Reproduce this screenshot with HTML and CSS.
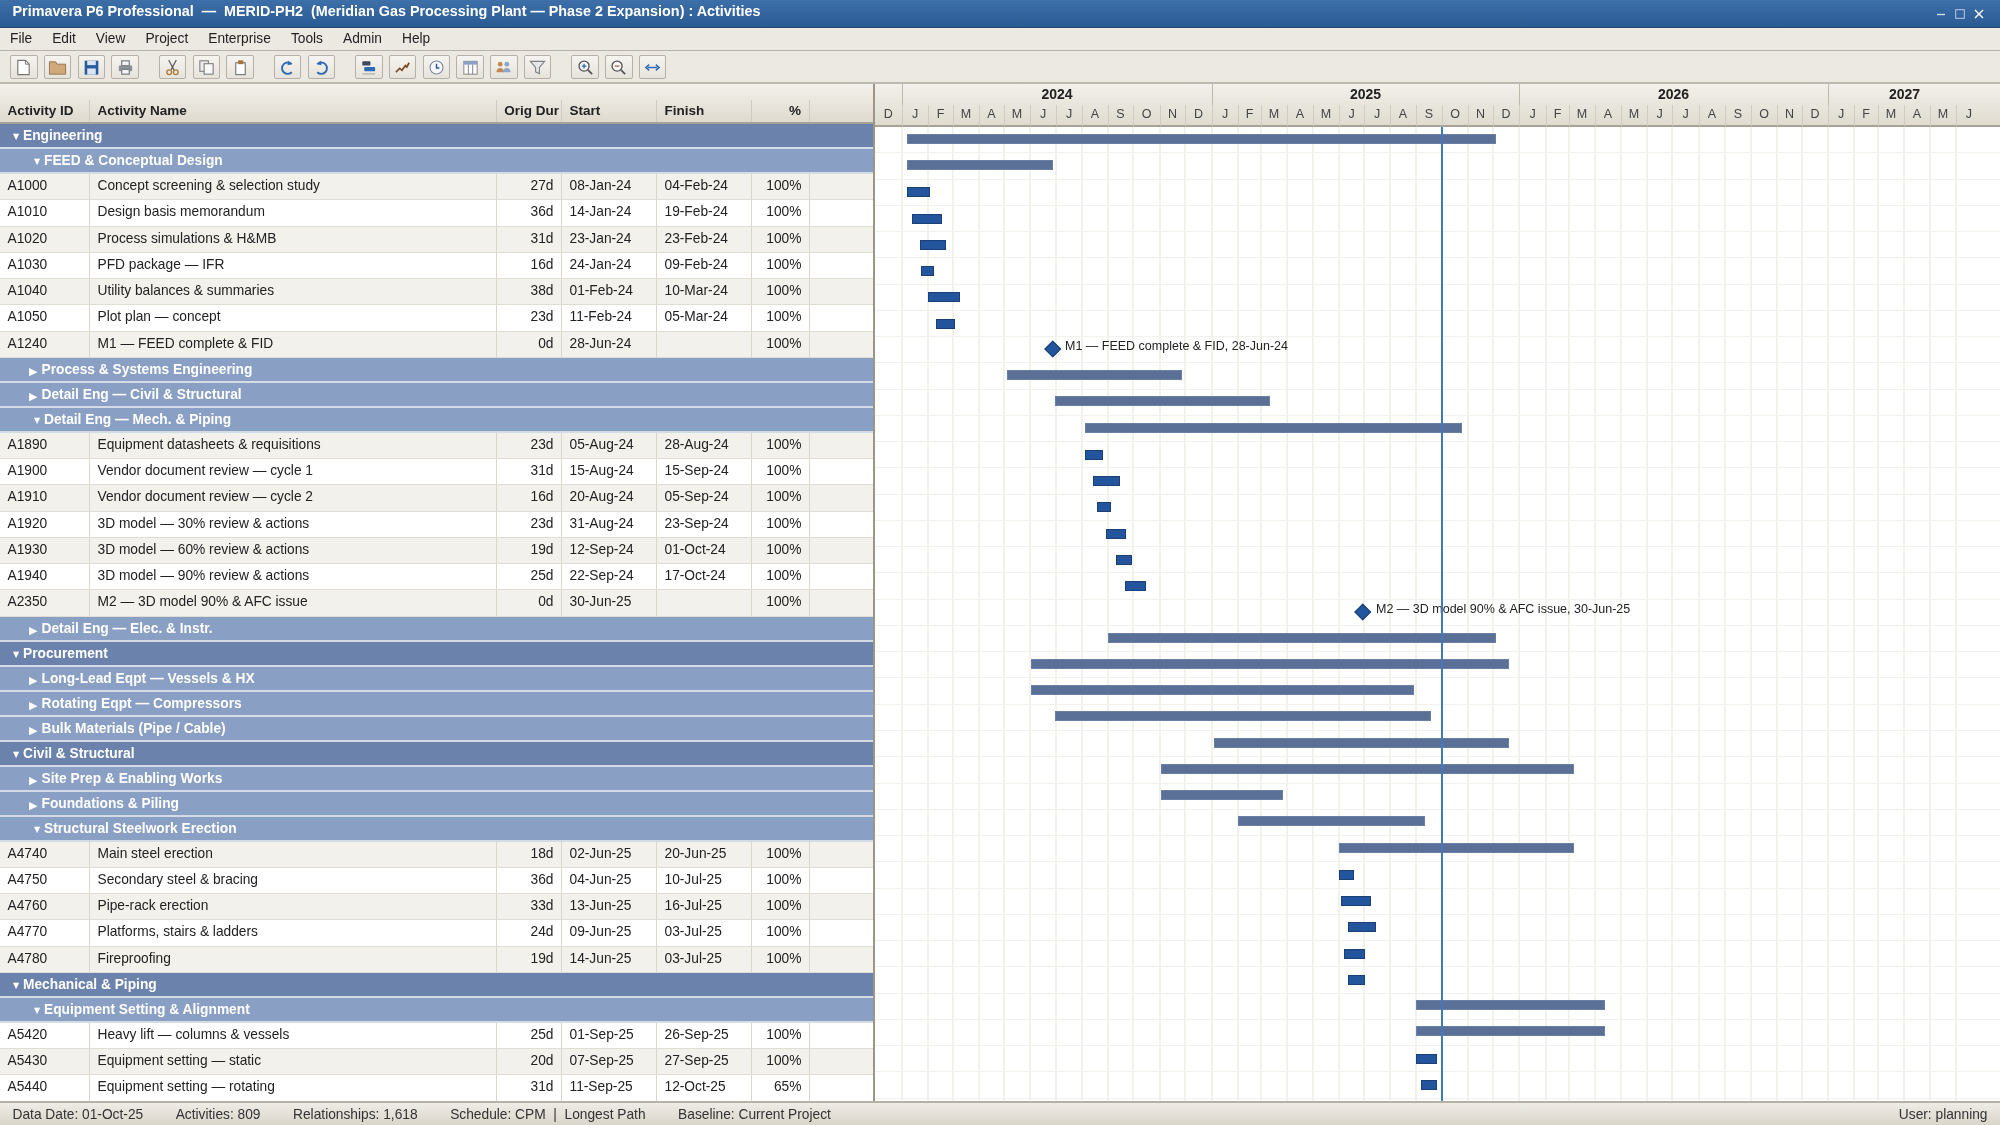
FILE: index.html
```html
<!DOCTYPE html>
<html lang="en">
<head>
    <meta charset="UTF-8">
    <title>Primavera P6 Professional</title>
    <link rel="stylesheet" href="styles.css">
</head>
<body>
    <div class="titlebar">
        <span class="title-text">Primavera P6 Professional &nbsp;—&nbsp; MERID-PH2 &nbsp;(Meridian Gas Processing Plant — Phase 2 Expansion) : Activities</span>
        <div class="win-controls">
            <svg width="10" height="10" viewBox="0 0 10 10"><path d="M1 5.5h8" stroke="#cfdcec" stroke-width="1.4"/></svg>
            <svg width="10" height="10" viewBox="0 0 10 10"><rect x="0.7" y="0.7" width="8.6" height="8.6" fill="none" stroke="#b9cde4" stroke-width="1"/></svg>
            <svg width="10" height="10" viewBox="0 0 10 10"><path d="M1 1l8 8M9 1l-8 8" stroke="#fff" stroke-width="1.4"/></svg>
        </div>
    </div>
    <div class="menubar">
        <span>File</span><span>Edit</span><span>View</span><span>Project</span><span>Enterprise</span><span>Tools</span><span>Admin</span><span>Help</span>
    </div>
    <div class="toolbar">
        <div class="tool-group">
            <button class="tool"><svg viewBox="0 0 20 20"><path d="M4 2.500h8l4 4v11H4z" fill="#fff" stroke="#777" stroke-width="1.200"/><path d="M12 2.500v4h4" fill="none" stroke="#777"/></svg></button>
            <button class="tool"><svg viewBox="0 0 20 20"><path d="M1.500 4h6.500l1.500 2.500h9v10.500h-17z" fill="#cfa97c" stroke="#96734c"/></svg></button>
            <button class="tool"><svg viewBox="0 0 20 20"><path d="M2.800 2.800h14.400v14.700H2.800z" fill="#275a9e"/><rect x="5.500" y="2.800" width="9" height="4.700" fill="#dbe4ef"/><rect x="5.500" y="11" width="9" height="6.500" fill="#dbe4ef"/></svg></button>
            <button class="tool"><svg viewBox="0 0 20 20"><rect x="6" y="3" width="8" height="5" fill="#f4f4f4" stroke="#7b7f86" stroke-width="1.300"/><rect x="3" y="8" width="14" height="6" rx="1" fill="#8a8e95"/><rect x="6" y="12" width="8" height="5" fill="#f4f4f4" stroke="#7b7f86" stroke-width="1.300"/></svg></button>
        </div>
        <div class="tool-group">
            <button class="tool"><svg viewBox="0 0 20 20"><path d="M6 2l5.500 10.500M14 2L8.500 12.500" stroke="#555" stroke-width="1.200" fill="none"/><circle cx="6.500" cy="15" r="2.500" fill="none" stroke="#b07a3a" stroke-width="1.400"/><circle cx="13.500" cy="15" r="2.500" fill="none" stroke="#b07a3a" stroke-width="1.400"/></svg></button>
            <button class="tool"><svg viewBox="0 0 20 20"><rect x="3" y="3" width="9" height="11" fill="#eee" stroke="#808080" stroke-width="1.200"/><rect x="7.500" y="6" width="9.500" height="11" fill="#f8f8f8" stroke="#808080" stroke-width="1.200"/></svg></button>
            <button class="tool"><svg viewBox="0 0 20 20"><rect x="5" y="5" width="10" height="12.500" fill="#fff" stroke="#777" stroke-width="1.200"/><rect x="7.500" y="2.500" width="5.500" height="4" fill="#a8703a"/></svg></button>
        </div>
        <div class="tool-group">
            <button class="tool"><svg viewBox="0 0 20 20"><path d="M14.500 6.500A6 6 0 1 0 14.500 15" fill="none" stroke="#2d6cb5" stroke-width="2"/><path d="M11 2.500l3.500 4-4.500 1" fill="#2d6cb5"/></svg></button>
            <button class="tool"><svg viewBox="0 0 20 20"><path d="M5.500 6.500A6 6 0 1 1 5.500 15" fill="none" stroke="#2d6cb5" stroke-width="2"/><path d="M9 2.500l-3.500 4 4.500 1" fill="#2d6cb5"/></svg></button>
        </div>
        <div class="tool-group">
            <button class="tool"><svg viewBox="0 0 20 20"><rect x="3.500" y="3.500" width="8.500" height="4.500" rx="1" fill="#3d4a5c"/><rect x="5.500" y="9.500" width="11.500" height="4.500" rx="1" fill="#2d6cb5"/><rect x="3.500" y="16" width="13.500" height="1.500" fill="#b9b6ad"/></svg></button>
            <button class="tool"><svg viewBox="0 0 20 20"><path d="M3 15l4-4 2.500 2L13 8l1.500 1.500L17 5" fill="none" stroke="#7a4a20" stroke-width="1.800"/></svg></button>
            <button class="tool"><svg viewBox="0 0 20 20"><circle cx="10" cy="10" r="6.800" fill="#f7f8fb" stroke="#7d8aa0" stroke-width="1.200"/><path d="M10 6v4.500h3" fill="none" stroke="#2a5a9c" stroke-width="1.500"/></svg></button>
            <button class="tool"><svg viewBox="0 0 20 20"><rect x="3" y="3.500" width="14" height="13.500" fill="#fff" stroke="#808080"/><rect x="3" y="3.500" width="14" height="3.500" fill="#8ba0c6"/><path d="M7.700 7v10M12.300 7v10" stroke="#808080"/></svg></button>
            <button class="tool"><svg viewBox="0 0 20 20"><circle cx="6.500" cy="6.500" r="2.500" fill="#c18a50"/><path d="M2.500 15c0-6 8-6 8 0z" fill="#c18a50"/><circle cx="13.500" cy="6.500" r="2.500" fill="#8aa6cc"/><path d="M9.500 15c0-6 8-6 8 0z" fill="#8aa6cc"/></svg></button>
            <button class="tool"><svg viewBox="0 0 20 20"><path d="M2.500 3.500h15L12 10v6.500l-4-2V10z" fill="#e6e8ec" stroke="#7d8084" stroke-width="1.200"/></svg></button>
        </div>
        <div class="tool-group">
            <button class="tool"><svg viewBox="0 0 20 20"><circle cx="8.500" cy="8.500" r="5.300" fill="#f7f8fb" stroke="#555" stroke-width="1.400"/><path d="M12.500 12.500l4.500 4.500" stroke="#555" stroke-width="1.800"/><path d="M6 8.500h5M8.500 6v5" stroke="#2d6cb5" stroke-width="1.400"/></svg></button>
            <button class="tool"><svg viewBox="0 0 20 20"><circle cx="8.500" cy="8.500" r="5.300" fill="#f7f8fb" stroke="#555" stroke-width="1.400"/><path d="M12.500 12.500l4.500 4.500" stroke="#555" stroke-width="1.800"/><path d="M6 8.500h5" stroke="#a8703a" stroke-width="1.400"/></svg></button>
            <button class="tool"><svg viewBox="0 0 20 20"><path d="M5 10h10M6.500 7L3 10l3.500 3M13.500 7L17 10l-3.500 3" fill="none" stroke="#2d6cb5" stroke-width="1.500"/></svg></button>
        </div>
    </div>

    <div class="workspace">
        <div class="table-pane">
            <div class="tbl-head">
                <div class="hcell">Activity ID</div>
                <div class="hcell">Activity Name</div>
                <div class="hcell num tight">Orig Dur</div>
                <div class="hcell">Start</div>
                <div class="hcell">Finish</div>
                <div class="hcell num">%</div>
                <div class="hcell"></div>
            </div>

            <div class="band lvl1"><i class="open">▼</i>Engineering</div>
            <div class="band lvl2"><i class="open">▼</i>FEED &amp; Conceptual Design</div>
            <div class="row alt"><div>A1000</div><div>Concept screening &amp; selection study</div><div class="num">27d</div><div>08-Jan-24</div><div>04-Feb-24</div><div class="num">100%</div><div></div></div>
            <div class="row"><div>A1010</div><div>Design basis memorandum</div><div class="num">36d</div><div>14-Jan-24</div><div>19-Feb-24</div><div class="num">100%</div><div></div></div>
            <div class="row alt"><div>A1020</div><div>Process simulations &amp; H&amp;MB</div><div class="num">31d</div><div>23-Jan-24</div><div>23-Feb-24</div><div class="num">100%</div><div></div></div>
            <div class="row"><div>A1030</div><div>PFD package — IFR</div><div class="num">16d</div><div>24-Jan-24</div><div>09-Feb-24</div><div class="num">100%</div><div></div></div>
            <div class="row alt"><div>A1040</div><div>Utility balances &amp; summaries</div><div class="num">38d</div><div>01-Feb-24</div><div>10-Mar-24</div><div class="num">100%</div><div></div></div>
            <div class="row"><div>A1050</div><div>Plot plan — concept</div><div class="num">23d</div><div>11-Feb-24</div><div>05-Mar-24</div><div class="num">100%</div><div></div></div>
            <div class="row alt"><div>A1240</div><div>M1 — FEED complete &amp; FID</div><div class="num">0d</div><div>28-Jun-24</div><div></div><div class="num">100%</div><div></div></div>
            <div class="band lvl2"><i>▶</i>Process &amp; Systems Engineering</div>
            <div class="band lvl2"><i>▶</i>Detail Eng — Civil &amp; Structural</div>
            <div class="band lvl2"><i class="open">▼</i>Detail Eng — Mech. &amp; Piping</div>
            <div class="row alt"><div>A1890</div><div>Equipment datasheets &amp; requisitions</div><div class="num">23d</div><div>05-Aug-24</div><div>28-Aug-24</div><div class="num">100%</div><div></div></div>
            <div class="row"><div>A1900</div><div>Vendor document review — cycle 1</div><div class="num">31d</div><div>15-Aug-24</div><div>15-Sep-24</div><div class="num">100%</div><div></div></div>
            <div class="row alt"><div>A1910</div><div>Vendor document review — cycle 2</div><div class="num">16d</div><div>20-Aug-24</div><div>05-Sep-24</div><div class="num">100%</div><div></div></div>
            <div class="row"><div>A1920</div><div>3D model — 30% review &amp; actions</div><div class="num">23d</div><div>31-Aug-24</div><div>23-Sep-24</div><div class="num">100%</div><div></div></div>
            <div class="row alt"><div>A1930</div><div>3D model — 60% review &amp; actions</div><div class="num">19d</div><div>12-Sep-24</div><div>01-Oct-24</div><div class="num">100%</div><div></div></div>
            <div class="row"><div>A1940</div><div>3D model — 90% review &amp; actions</div><div class="num">25d</div><div>22-Sep-24</div><div>17-Oct-24</div><div class="num">100%</div><div></div></div>
            <div class="row alt"><div>A2350</div><div>M2 — 3D model 90% &amp; AFC issue</div><div class="num">0d</div><div>30-Jun-25</div><div></div><div class="num">100%</div><div></div></div>
            <div class="band lvl2"><i>▶</i>Detail Eng — Elec. &amp; Instr.</div>
            <div class="band lvl1"><i class="open">▼</i>Procurement</div>
            <div class="band lvl2"><i>▶</i>Long-Lead Eqpt — Vessels &amp; HX</div>
            <div class="band lvl2"><i>▶</i>Rotating Eqpt — Compressors</div>
            <div class="band lvl2"><i>▶</i>Bulk Materials (Pipe / Cable)</div>
            <div class="band lvl1"><i class="open">▼</i>Civil &amp; Structural</div>
            <div class="band lvl2"><i>▶</i>Site Prep &amp; Enabling Works</div>
            <div class="band lvl2"><i>▶</i>Foundations &amp; Piling</div>
            <div class="band lvl2"><i class="open">▼</i>Structural Steelwork Erection</div>
            <div class="row alt"><div>A4740</div><div>Main steel erection</div><div class="num">18d</div><div>02-Jun-25</div><div>20-Jun-25</div><div class="num">100%</div><div></div></div>
            <div class="row"><div>A4750</div><div>Secondary steel &amp; bracing</div><div class="num">36d</div><div>04-Jun-25</div><div>10-Jul-25</div><div class="num">100%</div><div></div></div>
            <div class="row alt"><div>A4760</div><div>Pipe-rack erection</div><div class="num">33d</div><div>13-Jun-25</div><div>16-Jul-25</div><div class="num">100%</div><div></div></div>
            <div class="row"><div>A4770</div><div>Platforms, stairs &amp; ladders</div><div class="num">24d</div><div>09-Jun-25</div><div>03-Jul-25</div><div class="num">100%</div><div></div></div>
            <div class="row alt"><div>A4780</div><div>Fireproofing</div><div class="num">19d</div><div>14-Jun-25</div><div>03-Jul-25</div><div class="num">100%</div><div></div></div>
            <div class="band lvl1"><i class="open">▼</i>Mechanical &amp; Piping</div>
            <div class="band lvl2"><i class="open">▼</i>Equipment Setting &amp; Alignment</div>
            <div class="row"><div>A5420</div><div>Heavy lift — columns &amp; vessels</div><div class="num">25d</div><div>01-Sep-25</div><div>26-Sep-25</div><div class="num">100%</div><div></div></div>
            <div class="row alt"><div>A5430</div><div>Equipment setting — static</div><div class="num">20d</div><div>07-Sep-25</div><div>27-Sep-25</div><div class="num">100%</div><div></div></div>
            <div class="row"><div>A5440</div><div>Equipment setting — rotating</div><div class="num">31d</div><div>11-Sep-25</div><div>12-Oct-25</div><div class="num">65%</div><div></div></div>
        </div>

        <div class="gantt">
            <div class="years">
                <div class="year" style="width:27.5px"></div>
                <div class="year" style="width:310px">2024</div>
                <div class="year" style="width:307px">2025</div>
                <div class="year" style="width:309px">2026</div>
                <div class="year last" style="width:171.5px"><b>2027</b></div>
            </div>
            <div class="months">
                <div class="mon" style="width:27.5px"><span>D</span></div>
                <div class="mon" style="width:26px"><span>J</span></div>
                <div class="mon" style="width:25px"><span>F</span></div>
                <div class="mon" style="width:26px"><span>M</span></div>
                <div class="mon" style="width:25px"><span>A</span></div>
                <div class="mon" style="width:26px"><span>M</span></div>
                <div class="mon" style="width:26px"><span>J</span></div>
                <div class="mon" style="width:26px"><span>J</span></div>
                <div class="mon" style="width:26px"><span>A</span></div>
                <div class="mon" style="width:25px"><span>S</span></div>
                <div class="mon" style="width:27px"><span>O</span></div>
                <div class="mon" style="width:25px"><span>N</span></div>
                <div class="mon" style="width:27px"><span>D</span></div>
                <div class="mon" style="width:26px"><span>J</span></div>
                <div class="mon" style="width:23px"><span>F</span></div>
                <div class="mon" style="width:26px"><span>M</span></div>
                <div class="mon" style="width:26px"><span>A</span></div>
                <div class="mon" style="width:26px"><span>M</span></div>
                <div class="mon" style="width:25px"><span>J</span></div>
                <div class="mon" style="width:26px"><span>J</span></div>
                <div class="mon" style="width:26px"><span>A</span></div>
                <div class="mon" style="width:26px"><span>S</span></div>
                <div class="mon" style="width:26px"><span>O</span></div>
                <div class="mon" style="width:25px"><span>N</span></div>
                <div class="mon" style="width:26px"><span>D</span></div>
                <div class="mon" style="width:27px"><span>J</span></div>
                <div class="mon" style="width:23px"><span>F</span></div>
                <div class="mon" style="width:26px"><span>M</span></div>
                <div class="mon" style="width:26px"><span>A</span></div>
                <div class="mon" style="width:26px"><span>M</span></div>
                <div class="mon" style="width:25px"><span>J</span></div>
                <div class="mon" style="width:27px"><span>J</span></div>
                <div class="mon" style="width:26px"><span>A</span></div>
                <div class="mon" style="width:26px"><span>S</span></div>
                <div class="mon" style="width:26px"><span>O</span></div>
                <div class="mon" style="width:25px"><span>N</span></div>
                <div class="mon" style="width:26px"><span>D</span></div>
                <div class="mon" style="width:26px"><span>J</span></div>
                <div class="mon" style="width:24px"><span>F</span></div>
                <div class="mon" style="width:26px"><span>M</span></div>
                <div class="mon" style="width:26px"><span>A</span></div>
                <div class="mon" style="width:26px"><span>M</span></div>
                <div class="mon last" style="width:43.5px"><span>J</span></div>
            </div>
            <div class="grid-lines"></div>
            <div class="bars">
                <div class="g-row"><div class="bar sum" style="left:32px;width:589px"></div></div>
                <div class="g-row"><div class="bar sum" style="left:32px;width:146px"></div></div>
                <div class="g-row"><div class="bar task" style="left:32px;width:23px"></div></div>
                <div class="g-row"><div class="bar task" style="left:37px;width:30px"></div></div>
                <div class="g-row"><div class="bar task" style="left:45px;width:26px"></div></div>
                <div class="g-row"><div class="bar task" style="left:46px;width:13px"></div></div>
                <div class="g-row"><div class="bar task" style="left:53px;width:32px"></div></div>
                <div class="g-row"><div class="bar task" style="left:61px;width:19px"></div></div>
                <div class="g-row"><div class="ms" style="left:172px"></div><span class="ms-label" style="left:190px">M1 — FEED complete &amp; FID, 28-Jun-24</span></div>
                <div class="g-row"><div class="bar sum" style="left:132px;width:175px"></div></div>
                <div class="g-row"><div class="bar sum" style="left:180px;width:215px"></div></div>
                <div class="g-row"><div class="bar sum" style="left:210px;width:377px"></div></div>
                <div class="g-row"><div class="bar task" style="left:210px;width:18px"></div></div>
                <div class="g-row"><div class="bar task" style="left:218px;width:27px"></div></div>
                <div class="g-row"><div class="bar task" style="left:222px;width:14px"></div></div>
                <div class="g-row"><div class="bar task" style="left:231px;width:20px"></div></div>
                <div class="g-row"><div class="bar task" style="left:241px;width:16px"></div></div>
                <div class="g-row"><div class="bar task" style="left:250px;width:21px"></div></div>
                <div class="g-row"><div class="ms" style="left:482px"></div><span class="ms-label" style="left:501px">M2 — 3D model 90% &amp; AFC issue, 30-Jun-25</span></div>
                <div class="g-row"><div class="bar sum" style="left:233px;width:388px"></div></div>
                <div class="g-row"><div class="bar sum" style="left:156px;width:478px"></div></div>
                <div class="g-row"><div class="bar sum" style="left:156px;width:383px"></div></div>
                <div class="g-row"><div class="bar sum" style="left:180px;width:376px"></div></div>
                <div class="g-row"><div class="bar sum" style="left:339px;width:295px"></div></div>
                <div class="g-row"><div class="bar sum" style="left:286px;width:413px"></div></div>
                <div class="g-row"><div class="bar sum" style="left:286px;width:122px"></div></div>
                <div class="g-row"><div class="bar sum" style="left:363px;width:187px"></div></div>
                <div class="g-row"><div class="bar sum" style="left:464px;width:235px"></div></div>
                <div class="g-row"><div class="bar task" style="left:464px;width:15px"></div></div>
                <div class="g-row"><div class="bar task" style="left:466px;width:30px"></div></div>
                <div class="g-row"><div class="bar task" style="left:473px;width:28px"></div></div>
                <div class="g-row"><div class="bar task" style="left:469px;width:21px"></div></div>
                <div class="g-row"><div class="bar task" style="left:473px;width:17px"></div></div>
                <div class="g-row"><div class="bar sum" style="left:541px;width:189px"></div></div>
                <div class="g-row"><div class="bar sum" style="left:541px;width:189px"></div></div>
                <div class="g-row"><div class="bar task" style="left:541px;width:21px"></div></div>
                <div class="g-row"><div class="bar task" style="left:546px;width:16px"></div></div>
            </div>
            <div class="data-date"></div>
        </div>
    </div>

    <div class="statusbar">
        <span>Data Date: 01-Oct-25</span>
        <span>Activities: 809</span>
        <span>Relationships: 1,618</span>
        <span>Schedule: CPM &nbsp;|&nbsp; Longest Path</span>
        <span>Baseline: Current Project</span>
        <span class="status-user">User: planning</span>
    </div>
</body>
</html>
```

FILE: styles.css
```css
body, html {
    margin: 0;
    padding: 0;
    width: 100%;
    height: 100%;
    overflow: hidden;
    font-family: "Liberation Sans", Arial, sans-serif;
    font-size: 13.75px;
    color: #222;
    background-color: #ece9e2;
}
body {
    display: flex;
    flex-direction: column;
    filter: blur(0.35px);
}
.titlebar {
    height: 28px;
    flex: none;
    box-sizing: border-box;
    display: flex;
    align-items: flex-start;
    justify-content: space-between;
    padding: 4px 16px 0 12.5px;
    background: linear-gradient(#3d6fa8, #2a5a92);
    border-bottom: 1px solid #1f4674;
    color: white;
    font-size: 14.375px;
    font-weight: bold;
    line-height: 15px;
}
.win-controls {
    display: flex;
    gap: 9px;
    padding-top: 5px;
}
.menubar {
    height: 23px;
    flex: none;
    box-sizing: border-box;
    display: flex;
    align-items: center;
    gap: 20px;
    padding: 0 10px 2px;
    background-color: #ece9e2;
    border-bottom: 1px solid #b8b4a9;
}
.toolbar {
    height: 33px;
    flex: none;
    box-sizing: border-box;
    display: flex;
    align-items: flex-start;
    gap: 20px;
    padding: 4px 10px 0;
    background-color: #ece9e2;
    border-bottom: 2px solid #bdb9ad;
}
.tool-group {
    display: flex;
    gap: 6.25px;
}
.tool {
    width: 27.5px;
    height: 24px;
    padding: 0;
    display: flex;
    align-items: center;
    justify-content: center;
    background: linear-gradient(#f6f4ef, #e6e3db);
    border: 1px solid #b5b1a6;
    border-radius: 2px;
}
.tool svg {
    width: 19px;
    height: 19px;
}
.workspace {
    flex: 1;
    display: flex;
    min-height: 0;
}
.table-pane {
    width: 873px;
    flex: none;
    overflow: hidden;
    background-color: white;
}
.tbl-head, .row {
    display: grid;
    grid-template-columns: 90px 407px 65px 95px 95px 58px 1fr;
}
.tbl-head {
    height: 40px;
    box-sizing: border-box;
    padding-top: 16px;
    background: linear-gradient(#f3f1eb, #dedacf);
    border-bottom: 2px solid #a8a294;
    font-size: 13.5px;
    font-weight: bold;
}
.hcell {
    box-sizing: border-box;
    padding: 0 8px 0 7.5px;
    line-height: 22px;
    border-right: 1px solid #cfcbc0;
    white-space: nowrap;
}
.hcell.tight {
    padding: 0 2px 0 0;
}
.band {
    height: 25px;
    box-sizing: border-box;
    line-height: 23px;
    color: white;
    font-weight: bold;
    border-bottom: 2px solid #d5dbe5;
}
.band i {
    font-style: normal;
    font-weight: normal;
    font-family: "DejaVu Sans", sans-serif;
    display: inline-block;
    font-size: 11px;
    width: 12.5px;
    margin-left: -1px;
    vertical-align: -1px;
}
.band i.open {
    font-size: 8px;
    width: 14px;
    margin-left: 0;
    text-align: center;
    vertical-align: 1px;
}
.lvl1 {
    background-color: #6b82ad;
    padding-left: 9px;
}
.lvl2 {
    background-color: #8a9fc4;
    padding-left: 30px;
}
.row {
    height: 26.25px;
    box-sizing: border-box;
    line-height: 24px;
    background-color: white;
    border-bottom: 1px solid #e0ddd4;
}
.row.alt {
    background-color: #f3f1ec;
}
.row > div {
    box-sizing: border-box;
    padding: 0 7.5px;
    border-right: 1px solid #d9d6cc;
    white-space: nowrap;
}
.row > div:last-child, .hcell:last-child {
    border-right: none;
}
.num {
    text-align: right;
}
.gantt {
    flex: 1;
    position: relative;
    overflow: hidden;
    box-sizing: border-box;
    border-left: 2px solid #9c968a;
    background-color: white;
    display: flex;
    flex-direction: column;
}
.years {
    height: 21px;
    flex: none;
    display: flex;
    background: linear-gradient(#f3f1eb, #e8e5dc);
}
.year {
    box-sizing: border-box;
    flex: none;
    text-align: center;
    font-size: 14px;
    font-weight: bold;
    line-height: 20px;
    border-right: 1px solid #bdb9ad;
}
.year.last {
    border-right: none;
    text-align: left;
}
.year.last b {
    display: inline-block;
    width: 152px;
    text-align: center;
}
.months {
    flex: 1;
    display: flex;
}
.mon {
    flex: none;
    box-sizing: border-box;
    border-right: 2px solid #f3f1ec;
}
.mon span {
    display: block;
    height: 22px;
    box-sizing: border-box;
    margin-right: -2px;
    text-align: center;
    line-height: 19px;
    font-size: 12.5px;
    color: #444;
    background: linear-gradient(#e9e6dd, #dfdbd0);
    border-right: 1px solid #d0ccc1;
    border-bottom: 2px solid #a8a294;
}
.mon.last {
    border-right: none;
}
.mon.last span {
    margin-right: 0;
    border-right: none;
    padding-right: 19px;
}
.grid-lines {
    position: absolute;
    top: 43.4px;
    left: 0;
    right: 0;
    bottom: 0;
    background: repeating-linear-gradient(to bottom, transparent 0, transparent 25.26px, #f3f1ec 25.26px, #f3f1ec 26.26px);
}
.bars {
    position: absolute;
    top: 43.3px;
    left: 0;
    right: 0;
}
.g-row {
    height: 26.26px;
    position: relative;
}
.bar {
    position: absolute;
    box-sizing: border-box;
    height: 10px;
}
.bar.sum {
    top: 6.5px;
    background-color: #5a7097;
    border: 1px solid #6a7fa3;
}
.bar.task {
    top: 7.5px;
    background-color: #22559b;
    border: 1px solid #1b3f78;
}
.ms {
    position: absolute;
    top: 6px;
    width: 11.5px;
    height: 11.5px;
    background-color: #22559b;
    border: 1px solid #1b3f78;
    box-sizing: border-box;
    transform: rotate(45deg);
}
.ms-label {
    position: absolute;
    top: -1px;
    white-space: nowrap;
    line-height: 20px;
    font-size: 12.5px;
    color: #222;
}
.data-date {
    position: absolute;
    top: 43px;
    bottom: 0;
    left: 566px;
    width: 2px;
    background-color: #4179bf;
}
.statusbar {
    height: 24px;
    flex: none;
    box-sizing: border-box;
    display: flex;
    align-items: center;
    gap: 32.5px;
    padding: 0 12.5px;
    color: #333;
    background: linear-gradient(#efece6, #d9d5ca);
    border-top: 2px solid #b7b2a6;
}
.status-user {
    margin-left: auto;
}
```
